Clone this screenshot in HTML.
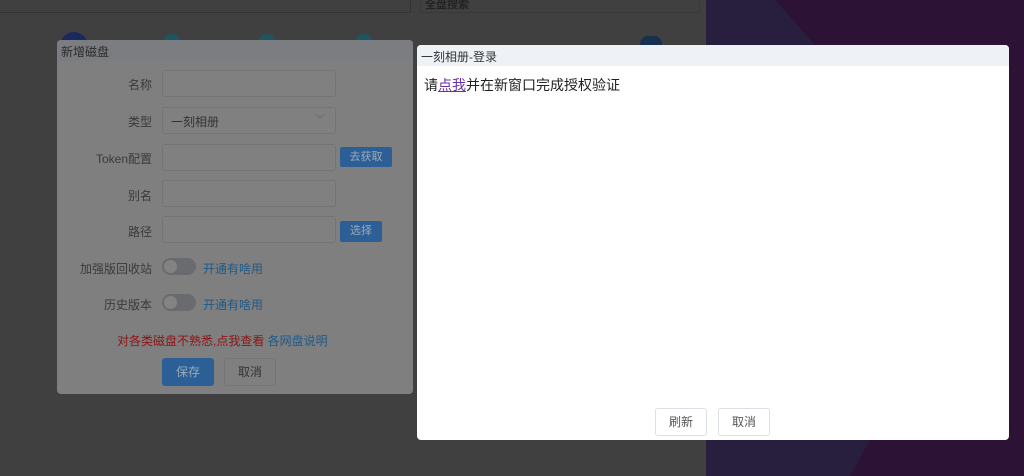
<!DOCTYPE html>
<html><head><meta charset="utf-8"><style>
*{box-sizing:border-box;margin:0;padding:0}
body{width:1024px;height:476px;overflow:hidden;position:relative;background:#404040;font-family:"Liberation Sans","Noto Sans CJK SC",sans-serif;font-size:12px}
.abs{position:absolute}
.right{left:706px;top:0;width:318px;height:476px;background:#2c1336}
.navy{left:706px;top:0;width:318px;height:476px;background:#281e3e;clip-path:polygon(0 0,69px 0,109px 45px,164px 440px,144px 476px,0 476px)}
.m1{left:57px;top:40px;width:356px;height:354px;background:#7f7f7f;border-radius:4px}
.m1 .hd{height:21px;background:#7b7d80;border-radius:4px 4px 0 0;color:#2a2a2a;font-size:12px;padding:3px 4px}
.lbl{color:#3a3a3a;font-size:12px;text-align:right;width:95px}
.inp{border:1px solid #747474;border-radius:3px;background:#808080;height:27px}
.btn{background:#2c5f95;color:#9ab;border-radius:2px;font-size:11px;text-align:center}
.sw{width:34px;height:17px;border-radius:9px;background:#6a6b6e}
.sw::after{content:"";position:absolute;left:2px;top:2px;width:13px;height:13px;border-radius:50%;background:#838383}
.lk{color:#1f5a88;font-size:12px}
.m2{left:417px;top:45px;width:592px;height:395px;background:#fff;border-radius:4px}
.m2 .hd{height:21px;background:#eef2f7;border-radius:4px 4px 0 0;color:#333;font-size:12px;padding:3px 4px}
.b2{border:1px solid #dcdfe6;border-radius:3px;width:52px;height:28px;color:#555;text-align:center;line-height:26px;font-size:12px;background:#fff}
</style></head><body>
<div class="abs" style="left:0;top:0;width:411px;height:13px;border-bottom:1px solid #333;border-right:1px solid #333"></div>
<div class="abs" style="left:420px;top:0;width:280px;height:13px;border:1px solid #393939;border-top:none"></div>
<div class="abs" style="left:425px;top:-4px;color:#222;font-size:11px;font-weight:bold">全盘搜索</div>
<div class="abs" style="left:60px;top:32px;width:28px;height:28px;border-radius:50%;background:#1b2a5e"></div>
<div class="abs" style="left:163px;top:34px;width:18px;height:18px;border-radius:50%;background:#1d5660"></div>
<div class="abs" style="left:258px;top:34px;width:18px;height:18px;border-radius:50%;background:#1d5660"></div>
<div class="abs" style="left:355px;top:34px;width:18px;height:18px;border-radius:50%;background:#1d5660"></div>
<div class="abs" style="left:640px;top:36px;width:22px;height:12px;border-radius:8px 8px 0 0;background:#163050"></div>
<div class="abs right"></div>
<div class="abs navy"></div>

<div class="abs m1">
<div class="hd">新增磁盘</div>
</div>
<div class="abs lbl" style="left:57px;top:76px">名称</div>
<div class="abs inp" style="left:162px;top:70px;width:174px"></div>
<div class="abs lbl" style="left:57px;top:113px">类型</div>
<div class="abs inp" style="left:162px;top:107px;width:174px;color:#333;padding:5px 8px">一刻相册<span style="position:absolute;right:10px;top:3px;color:#666;font-size:10px">﹀</span></div>
<div class="abs lbl" style="left:57px;top:150px">Token配置</div>
<div class="abs inp" style="left:162px;top:144px;width:174px"></div>
<div class="abs btn" style="left:340px;top:147px;width:52px;height:20px;line-height:20px">去获取</div>
<div class="abs lbl" style="left:57px;top:187px">别名</div>
<div class="abs inp" style="left:162px;top:180px;width:174px"></div>
<div class="abs lbl" style="left:57px;top:223px">路径</div>
<div class="abs inp" style="left:162px;top:216px;width:174px"></div>
<div class="abs btn" style="left:340px;top:221px;width:42px;height:21px;line-height:21px">选择</div>
<div class="abs lbl" style="left:55px;top:260px;width:97px">加强版回收站</div>
<div class="abs sw" style="left:162px;top:258px"></div>
<div class="abs lk" style="left:203px;top:260px">开通有啥用</div>
<div class="abs lbl" style="left:57px;top:296px">历史版本</div>
<div class="abs sw" style="left:162px;top:294px"></div>
<div class="abs lk" style="left:203px;top:296px">开通有啥用</div>
<div class="abs" style="left:117px;top:332px;color:#8e1414;font-size:12px">对各类磁盘不熟悉,点我查看 <span class="lk">各网盘说明</span></div>
<div class="abs btn" style="left:162px;top:358px;width:52px;height:28px;line-height:28px;font-size:12px;border-radius:3px">保存</div>
<div class="abs" style="left:224px;top:358px;width:52px;height:28px;line-height:26px;border:1px solid #747474;border-radius:3px;color:#333;text-align:center">取消</div>

<div class="abs m2">
<div class="hd">一刻相册-登录</div>
<div style="padding:9px 7px;font-size:14px;color:#222">请<span style="color:#6a2fa0;text-decoration:underline">点我</span>并在新窗口完成授权验证</div>
</div>
<div class="abs b2" style="left:655px;top:408px">刷新</div>
<div class="abs b2" style="left:718px;top:408px">取消</div>
</body></html>
